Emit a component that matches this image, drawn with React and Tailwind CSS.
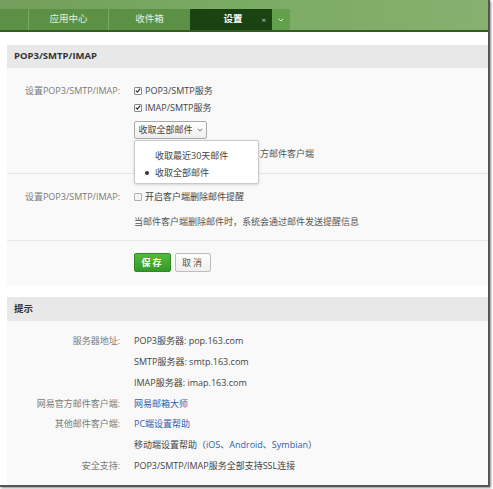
import React from "react";

const Check = ({ checked }) => (
  <span className={`inline-flex w-[8px] h-[8px] border items-center justify-center rounded-[1px] ${checked ? "border-[#8a8a8a] bg-white" : "border-[#b0b0b0] bg-[#f4f4f4]"}`}>
    {checked && (
      <svg width="7" height="7" viewBox="0 0 7 7">
        <path d="M1 3.6 L2.8 5.4 L6 1.4" stroke="#333" strokeWidth="1.4" fill="none" />
      </svg>
    )}
  </span>
);

const Row = ({ label, children, h = "h-[17px]" }) => (
  <div className={`flex items-center ${h}`}>
    <div className="w-[113px] text-right text-[#7a7a7a] shrink-0">{label}</div>
    <div className="pl-[14px] flex items-center gap-[3px] text-[#444] whitespace-nowrap">{children}</div>
  </div>
);

export default function App() {
  return (
    <div className="w-[493px] h-[489px] bg-white relative overflow-hidden font-['Open_Sans','Noto_Sans_CJK_SC',sans-serif] text-[9px]">
      <div className="w-[490px] h-[487px] border-r-2 border-b-2 border-[#565656] shadow-[1px_1px_2px_rgba(0,0,0,0.45)] overflow-hidden flex flex-col">
        {/* header */}
        <div className="h-[32px] shrink-0 bg-gradient-to-r from-[#729f5b] via-[#7aab63] to-[#86b06e] flex items-end border-b-[2px] border-[#325c24]">
          <div className="flex h-[21px] items-stretch bg-[#5c9145] pl-[28px]">
            <div className="w-[80px] border-l border-[#7aa866] flex items-center justify-center text-[#e6f0df] text-[9.5px]">应用中心</div>
            <div className="w-[82px] border-l border-[#7aa866] flex items-center justify-center text-[#e6f0df] text-[9.5px]">收件箱</div>
            <div className="w-[82px] bg-[#1b4311] flex items-center relative">
              <span className="flex-1 text-center text-white font-bold text-[9.5px] pl-[4px]">设置</span>
              <span className="absolute right-[6px] text-[#c8d4c2] text-[8px]">×</span>
            </div>
            <div className="w-[18px] bg-[#62a04b] flex items-center justify-center">
              <svg width="6" height="4" viewBox="0 0 6 4">
                <path d="M0.7 0.8 L3 3 L5.3 0.8" stroke="#e8f2e2" strokeWidth="1" fill="none" />
              </svg>
            </div>
          </div>
        </div>

        <div className="pt-[13px] pl-[7px] flex flex-col">
          {/* section 1 */}
          <div className="h-[23px] bg-[#e8e8e8] flex items-center pl-[7px] font-bold text-[#333] text-[9.5px]">POP3/SMTP/IMAP</div>
          <div className="bg-[#f9f9f9]">
            <div className="pt-[14px] pb-[11px] border-b border-[#e6e6e6]">
              <Row label="设置POP3/SMTP/IMAP:">
                <Check checked />
                <span>POP3/SMTP服务</span>
              </Row>
              <Row label="">
                <Check checked />
                <span>IMAP/SMTP服务</span>
              </Row>
              <div className="pl-[127px] pt-[5px] relative">
                <div className="inline-flex h-[18px] w-[73px] items-center justify-center gap-[4px] border border-[#a9a9a9] rounded-[2px] bg-gradient-to-b from-white to-[#eeeeee] text-[#444]">
                  <span>收取全部邮件</span>
                  <svg width="6" height="4" viewBox="0 0 6 4">
                    <path d="M0.7 0.8 L3 3 L5.3 0.8" stroke="#666" strokeWidth="0.9" fill="none" />
                  </svg>
                </div>
                <div className="h-[17px] flex items-center text-[#555] mt-[6px] whitespace-nowrap">设置收取的邮件范围，用于第三方邮件客户端</div>
                <div className="absolute left-[127px] top-[24px] w-[125px] h-[44px] bg-white border border-[#c9c9c9] rounded-[2px] shadow-[0_1px_3px_rgba(0,0,0,0.15)] pt-[6px] text-[#444] z-10">
                  <div className="h-[17px] flex items-center pl-[20px]">收取最近30天邮件</div>
                  <div className="h-[17px] flex items-center pl-[10px] gap-[6px]">
                    <span className="w-[4px] h-[4px] rounded-full bg-[#333]" />
                    <span>收取全部邮件</span>
                  </div>
                </div>
              </div>
            </div>
            <div className="pt-[14px] pb-[10px] border-b border-[#e6e6e6]">
              <Row label="设置POP3/SMTP/IMAP:">
                <Check />
                <span>开启客户端删除邮件提醒</span>
              </Row>
              <div className="pl-[127px] mt-[8px] h-[17px] flex items-center text-[#555]">当邮件客户端删除邮件时，系统会通过邮件发送提醒信息</div>
            </div>
            <div className="pt-[12px] pb-[13px] pl-[127px] flex gap-[4px]">
              <button className="w-[37px] h-[19px] rounded-[2px] border border-[#2e8a22] bg-gradient-to-b from-[#55b83e] to-[#339a26] text-white font-bold tracking-[2px] flex items-center justify-center">保存</button>
              <button className="w-[36px] h-[19px] rounded-[2px] border border-[#bdbdbd] bg-gradient-to-b from-white to-[#efefef] text-[#555] tracking-[2px] flex items-center justify-center">取消</button>
            </div>
          </div>

          {/* section 2 */}
          <div className="h-[12px] bg-white" />
          <div className="h-[24px] bg-[#e8e8e8] flex items-center pl-[7px] font-bold text-[#333] text-[9.5px]">提示</div>
          <div className="bg-[#f9f9f9] pt-[9.5px] pb-[10px]">
            <Row label="服务器地址:" h="h-[20.8px]">POP3服务器: pop.163.com</Row>
            <Row label="" h="h-[20.8px]">SMTP服务器: smtp.163.com</Row>
            <Row label="" h="h-[20.8px]">IMAP服务器: imap.163.com</Row>
            <Row label="网易官方邮件客户端:" h="h-[20.8px]">
              <span className="text-[#2f5fae]">网易邮箱大师</span>
            </Row>
            <Row label="其他邮件客户端:" h="h-[20.8px]">
              <span className="text-[#2f5fae]">PC端设置帮助</span>
            </Row>
            <Row label="" h="h-[20.8px]">
              <span>
                移动端设置帮助（<span className="text-[#2f5fae]">iOS</span>、<span className="text-[#2f5fae]">Android</span>、<span className="text-[#2f5fae]">Symbian</span>）
              </span>
            </Row>
            <Row label="安全支持:" h="h-[20.8px]">POP3/SMTP/IMAP服务全部支持SSL连接</Row>
          </div>
        </div>
      </div>
    </div>
  );
}
